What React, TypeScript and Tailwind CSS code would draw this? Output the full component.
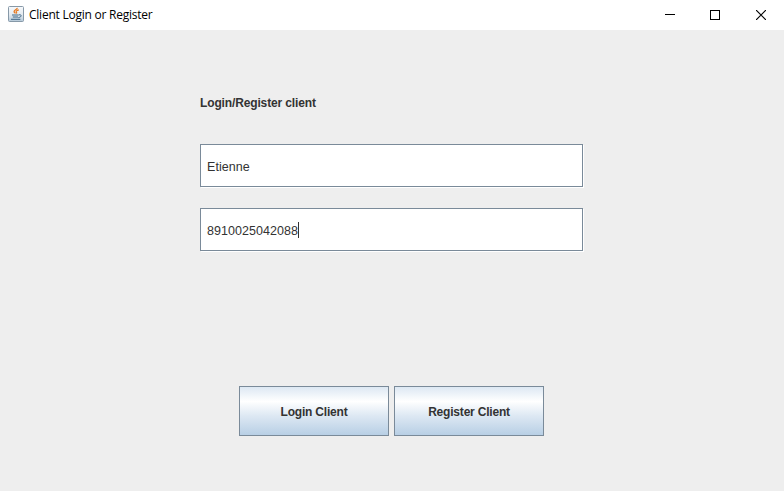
import React from "react";

function JavaIcon() {
  return (
    <svg width="16" height="16" viewBox="0 0 16 16" className="mb-[2px] block shrink-0">
      <defs>
        <linearGradient id="tile" x1="0" y1="0" x2="0" y2="1">
          <stop offset="0" stopColor="#f7f9fb" />
          <stop offset="0.55" stopColor="#e3eaf0" />
          <stop offset="1" stopColor="#b4c8d8" />
        </linearGradient>
      </defs>
      <rect x="0.5" y="0.5" width="15" height="15" rx="1" fill="url(#tile)" stroke="#8799a8" />
      <path d="M9.2 1.8C9.6 3.4 5.8 4.1 6.1 5.6c.1.8 1 1.1 1.1 1.9M10.8 3.9C8.6 4.5 7.8 5.2 8.4 6.1c.4.5.3.9-.1 1.4" fill="none" stroke="#e67a22" strokeWidth="1.3" />
      <path d="M4 9h6.8M4.8 11h5.2M3 13.3h9.4M11 8.8c3.2-.4 2.8 2.3-.6 2.8" fill="none" stroke="#3f6685" strokeWidth="1" />
    </svg>
  );
}

function TitleBar() {
  return (
    <header className="flex h-[30px] items-center bg-white pl-2">
      <JavaIcon />
      <h1 className="ml-[5px] flex-1 whitespace-nowrap font-['Open_Sans','Noto_Sans',sans-serif] text-[12px] leading-[16px] tracking-[-0.24px] text-black">
        Client Login or Register
      </h1>
      <div className="flex h-full">
        <button aria-label="Minimize" className="flex w-[45px] items-center justify-center pl-px">
          <svg width="10" height="10" viewBox="0 0 10 10" shapeRendering="crispEdges">
            <path d="M0 4.5h10" stroke="#000" />
          </svg>
        </button>
        <button aria-label="Maximize" className="flex w-[46px] items-center justify-center">
          <svg width="10" height="10" viewBox="0 0 10 10" shapeRendering="crispEdges">
            <path d="M.5.5h9v9h-9z" fill="none" stroke="#000" />
          </svg>
        </button>
        <button aria-label="Close" className="flex w-[46px] items-center justify-center">
          <svg width="10" height="10" viewBox="0 0 10 10">
            <path d="M0 0l10 10M10 0L0 10" stroke="#000" strokeWidth="1.2" />
          </svg>
        </button>
      </div>
    </header>
  );
}

function Field({ value, caret = false }: { value: string; caret?: boolean }) {
  return (
    <div className="flex h-[43px] w-[383px] items-center border border-[#7a8a99] bg-white pt-[2px] pl-[6px] shadow-[1px_1px_0_#ffffff]">
      <span className="text-[12.5px] leading-[16px] tracking-[0.04px]">{value}</span>
      {caret && <span className="mb-[2px] h-4 w-px bg-[#333333]" />}
    </div>
  );
}

function MetalButton({ label }: { label: string }) {
  return (
    <button className="flex h-[50px] w-[150px] items-center justify-center border border-[#7a8a99] bg-[linear-gradient(to_bottom,#dde8f3_0%,#ffffff_30%,#dde8f3_60%,#b8cfe5_100%)] pt-[2px] text-[12px] leading-[16px] font-bold tracking-[-0.2px]">
      {label}
    </button>
  );
}

export default function App() {
  return (
    <div className="flex h-[491px] w-[784px] flex-col overflow-hidden bg-[#eeeeee] font-['Liberation_Sans',Arial,sans-serif] text-[#333333]">
      <TitleBar />
      <main className="flex flex-1 flex-col pt-[65px]">
        <p className="ml-[200px] text-[12px] leading-[16px] font-bold tracking-[-0.14px]">Login/Register client</p>
        <div className="mt-[33px] ml-[200px] flex flex-col gap-[21px]">
          <Field value="Etienne" />
          <Field value="8910025042088" caret />
        </div>
        <div className="mt-[135px] ml-[239px] flex gap-[5px]">
          <MetalButton label="Login Client" />
          <MetalButton label="Register Client" />
        </div>
      </main>
    </div>
  );
}
